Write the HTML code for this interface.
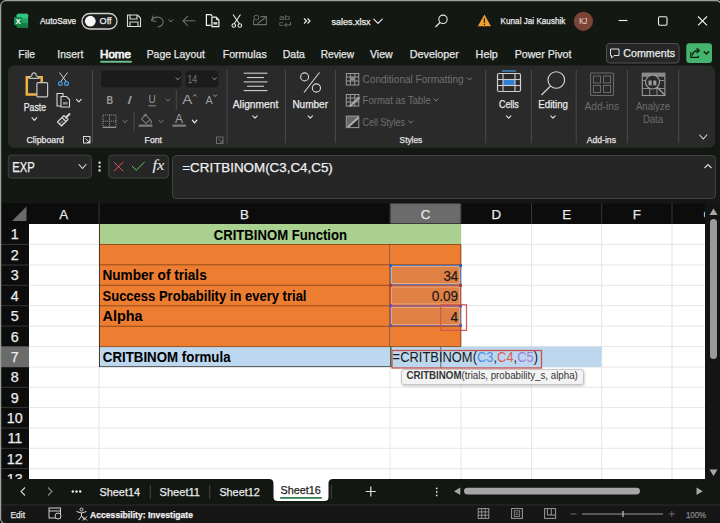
<!DOCTYPE html>
<html><head><meta charset="utf-8"><style>
html,body{margin:0;padding:0;width:720px;height:523px;overflow:hidden;background:#141813;}
svg{display:block;}
</style></head><body>
<svg width="720" height="523" viewBox="0 0 720 523">
<defs><filter id="sh" x="-10%" y="-30%" width="120%" height="170%"><feDropShadow dx="0.5" dy="1" stdDeviation="1" flood-color="#000" flood-opacity="0.25"/></filter></defs>
<rect x="0" y="0" width="720" height="523" fill="#141813" rx="0" /><rect x="16.7" y="13.7" width="11.4" height="14" fill="#21a366" rx="1.5" /><rect x="16.7" y="13.7" width="11.4" height="4.7" fill="#33c481" rx="1.5" /><rect x="16.7" y="23" width="11.4" height="4.7" fill="#1a7a45" rx="1.5" /><rect x="14" y="17" width="8" height="8.2" fill="#138a4b" rx="1" /><text x="15.4" y="23.7" font-size="8" fill="#ffffff" font-weight="bold" style="font-family:'Liberation Sans'" textLength="5.3" lengthAdjust="spacingAndGlyphs" >X</text><text x="40" y="24.3" font-size="9.6" fill="#f0f0f0" font-weight="normal" style="font-family:'Liberation Sans'" stroke="#f0f0f0" stroke-width="0.25" textLength="36.2" lengthAdjust="spacingAndGlyphs" >AutoSave</text><rect x="82" y="13.5" width="35" height="15.5" fill="#1c1c1c" rx="7.75" stroke="#d0d0d0" stroke-width="1.3" /><circle cx="90.3" cy="21.2" r="5.4" fill="#f6f6f6"/><text x="99.6" y="24.2" font-size="9.8" fill="#f0f0f0" font-weight="normal" style="font-family:'Liberation Sans'" stroke="#f0f0f0" stroke-width="0.25" textLength="12" lengthAdjust="spacingAndGlyphs" >Off</text><path d="M127.5 15 H137.5 L140.5 18 V26.5 H127.5 Z" stroke="#dcdcdc" fill="none" stroke-width="1.1" /><path d="M130 15 V19 H137 V15" stroke="#dcdcdc" fill="none" stroke-width="1.1" /><path d="M130 26.5 V22 H138 V26.5" stroke="#dcdcdc" fill="none" stroke-width="1.1" /><path d="M153 16 L151.5 20.5 L156 21.5 M151.8 20.3 C154 16.5 160 16 162.5 19.5 C164.5 23 162 26.5 158 27" stroke="#6f6f6f" fill="none" stroke-width="1.1" stroke-linecap="round" stroke-linejoin="round"/><path d="M168.8 19.6 L170.8 22.0 L172.8 19.6" stroke="#7a7a7a" fill="none" stroke-width="1" stroke-linecap="round" stroke-linejoin="round"/><path d="M195 20.8 H183 M187.5 16.3 L183 20.8 L187.5 25.3" stroke="#6f6f6f" fill="none" stroke-width="1.1" stroke-linecap="round" stroke-linejoin="round"/><path d="M210.8 25.4 H206.4 V14.7 H210.3 C211.3 14.7 212 15.3 212 16.3" stroke="#f2f2f2" fill="none" stroke-width="1.2" /><path d="M211.9 17.1 H216.2 L218.9 19.8 V26.7 H211.9 Z" stroke="#f2f2f2" fill="#141813" stroke-width="1.2" stroke-linejoin="round"/><path d="M216.4 17.3 V19.7 H218.8" stroke="#f2f2f2" fill="none" stroke-width="1" /><rect x="213.4" y="22.1" width="3.9" height="2.5" fill="#cfcfcf" rx="0" /><path d="M233 14.5 L239.5 24 M240.5 14.5 L234 24" stroke="#e8e8e8" fill="none" stroke-width="1.1" /><circle cx="233.8" cy="25.5" r="1.8" fill="none" stroke="#e8e8e8" stroke-width="1.1"/><circle cx="239.8" cy="25.5" r="1.8" fill="none" stroke="#e8e8e8" stroke-width="1.1"/><path d="M253.6 19.5 V24.6 H266.4 V16.6 H260.5 M257.5 23.5 L265.5 17.5" stroke="#6a6a6a" fill="none" stroke-width="1.1" /><circle cx="256.4" cy="17.6" r="2.4" fill="none" stroke="#6a6a6a" stroke-width="1"/><text x="279" y="20.3" font-size="7.6" fill="#707070" font-weight="normal" style="font-family:'Liberation Sans'" textLength="11" lengthAdjust="spacingAndGlyphs" >ab</text><text x="278.8" y="26.3" font-size="7.6" fill="#707070" font-weight="normal" style="font-family:'Liberation Sans'" textLength="4.5" lengthAdjust="spacingAndGlyphs" >c</text><path d="M284.5 25 H290.5 V22 M286.5 23 L284.5 25 L286.5 27" stroke="#707070" fill="none" stroke-width="1" /><path d="M304 18.5 L306.5 21 L304 23.5 M307.5 18.5 L310 21 L307.5 23.5" stroke="#f0f0f0" fill="none" stroke-width="1.1" /><text x="331.5" y="24.8" font-size="9.4" fill="#f0f0f0" font-weight="normal" style="font-family:'Liberation Sans'" stroke="#f0f0f0" stroke-width="0.25" textLength="39" lengthAdjust="spacingAndGlyphs" >sales.xlsx</text><path d="M373.7 19.099999999999998 L378 23.3 L382.3 19.099999999999998" stroke="#f0f0f0" fill="none" stroke-width="1.1" stroke-linecap="round" stroke-linejoin="round"/><circle cx="443" cy="19.3" r="4.2" fill="none" stroke="#e8e8e8" stroke-width="1.1"/><line x1="440" y1="22.5" x2="435.5" y2="27" stroke="#e8e8e8" stroke-width="1.2" /><path d="M484.4 14.5 L491 26.3 H477.8 Z" stroke="none" fill="#f0a030" stroke-width="1" /><rect x="483.8" y="18.2" width="1.2" height="4.6" fill="#2a1a00" rx="0" /><rect x="483.8" y="23.8" width="1.2" height="1.3" fill="#2a1a00" rx="0" /><text x="500.6" y="24.2" font-size="9.9" fill="#f0f0f0" font-weight="normal" style="font-family:'Liberation Sans'" stroke="#f0f0f0" stroke-width="0.25" textLength="64.8" lengthAdjust="spacingAndGlyphs" >Kunal Jai Kaushik</text><circle cx="583.4" cy="21.3" r="9.6" fill="#7a4436"/><text x="579.2" y="24.3" font-size="8.2" fill="#f0e0da" font-weight="normal" style="font-family:'Liberation Sans'" textLength="8.2" lengthAdjust="spacingAndGlyphs" >KJ</text><line x1="618.7" y1="20.5" x2="627.5" y2="20.5" stroke="#f0f0f0" stroke-width="1.1" /><rect x="658.5" y="16.7" width="8.5" height="8.5" fill="none" rx="1.2" stroke="#f0f0f0" stroke-width="1.1" /><path d="M698 16.5 L707 25.3 M707 16.5 L698 25.3" stroke="#f0f0f0" fill="none" stroke-width="1.1" /><text x="18.3" y="57.6" font-size="11.4" fill="#e6e6e6" font-weight="normal" style="font-family:'Liberation Sans'" stroke="#e6e6e6" stroke-width="0.25" textLength="16.7" lengthAdjust="spacingAndGlyphs" >File</text><text x="57.3" y="57.6" font-size="11.4" fill="#e6e6e6" font-weight="normal" style="font-family:'Liberation Sans'" stroke="#e6e6e6" stroke-width="0.25" textLength="26.0" lengthAdjust="spacingAndGlyphs" >Insert</text><text x="100" y="57.6" font-size="11.4" fill="#f2f2f2" font-weight="normal" style="font-family:'Liberation Sans'" stroke="#f2f2f2" stroke-width="0.75" textLength="31" lengthAdjust="spacingAndGlyphs" >Home</text><text x="146.7" y="57.6" font-size="11.4" fill="#e6e6e6" font-weight="normal" style="font-family:'Liberation Sans'" stroke="#e6e6e6" stroke-width="0.25" textLength="58.3" lengthAdjust="spacingAndGlyphs" >Page Layout</text><text x="222.7" y="57.6" font-size="11.4" fill="#e6e6e6" font-weight="normal" style="font-family:'Liberation Sans'" stroke="#e6e6e6" stroke-width="0.25" textLength="44.0" lengthAdjust="spacingAndGlyphs" >Formulas</text><text x="282.7" y="57.6" font-size="11.4" fill="#e6e6e6" font-weight="normal" style="font-family:'Liberation Sans'" stroke="#e6e6e6" stroke-width="0.25" textLength="22.3" lengthAdjust="spacingAndGlyphs" >Data</text><text x="320.7" y="57.6" font-size="11.4" fill="#e6e6e6" font-weight="normal" style="font-family:'Liberation Sans'" stroke="#e6e6e6" stroke-width="0.25" textLength="33.3" lengthAdjust="spacingAndGlyphs" >Review</text><text x="370" y="57.6" font-size="11.4" fill="#e6e6e6" font-weight="normal" style="font-family:'Liberation Sans'" stroke="#e6e6e6" stroke-width="0.25" textLength="22.7" lengthAdjust="spacingAndGlyphs" >View</text><text x="409.7" y="57.6" font-size="11.4" fill="#e6e6e6" font-weight="normal" style="font-family:'Liberation Sans'" stroke="#e6e6e6" stroke-width="0.25" textLength="49.2" lengthAdjust="spacingAndGlyphs" >Developer</text><text x="475.6" y="57.6" font-size="11.4" fill="#e6e6e6" font-weight="normal" style="font-family:'Liberation Sans'" stroke="#e6e6e6" stroke-width="0.25" textLength="22.2" lengthAdjust="spacingAndGlyphs" >Help</text><text x="514.7" y="57.6" font-size="11.4" fill="#e6e6e6" font-weight="normal" style="font-family:'Liberation Sans'" stroke="#e6e6e6" stroke-width="0.25" textLength="56.7" lengthAdjust="spacingAndGlyphs" >Power Pivot</text><rect x="100" y="60.8" width="32" height="2" fill="#6dbd8a" rx="1" /><rect x="606.5" y="43.5" width="72.5" height="19.5" fill="#262626" rx="3" stroke="#505050" stroke-width="1" /><path d="M610.5 49 H619 V55.5 H614 L611.5 58 V55.5 H610.5 Z" stroke="#e0e0e0" fill="none" stroke-width="1" stroke-linejoin="round"/><text x="623.3" y="56.8" font-size="11.2" fill="#ececec" font-weight="normal" style="font-family:'Liberation Sans'" stroke="#ececec" stroke-width="0.25" textLength="51.7" lengthAdjust="spacingAndGlyphs" >Comments</text><rect x="686.3" y="43.3" width="25.7" height="19.7" fill="#47b46d" rx="3" /><path d="M690.8 52 V57.3 H698.3 V55.8" stroke="#0a1f10" fill="none" stroke-width="1.2" /><path d="M692.3 55.5 C692.8 52.2 694.8 50.6 698.3 50.6" stroke="#0a1f10" fill="none" stroke-width="1.3" /><path d="M696.6 48.2 L699.3 50.6 L696.6 53" stroke="#0a1f10" fill="none" stroke-width="1.3" stroke-linejoin="round"/><path d="M704.1999999999999 51.8 L706.4 54.0 L708.6 51.8" stroke="#0a1f10" fill="none" stroke-width="1.4" stroke-linecap="round" stroke-linejoin="round"/><rect x="8" y="65.5" width="707" height="82.3" fill="#2a2a2a" rx="6" /><line x1="92.5" y1="70" x2="92.5" y2="143" stroke="#4a4a4a" stroke-width="1" /><line x1="227" y1="70" x2="227" y2="143" stroke="#4a4a4a" stroke-width="1" /><line x1="285.4" y1="70" x2="285.4" y2="143" stroke="#4a4a4a" stroke-width="1" /><line x1="335.4" y1="70" x2="335.4" y2="143" stroke="#4a4a4a" stroke-width="1" /><line x1="485.7" y1="70" x2="485.7" y2="143" stroke="#4a4a4a" stroke-width="1" /><line x1="531.3" y1="70" x2="531.3" y2="143" stroke="#4a4a4a" stroke-width="1" /><line x1="576.2" y1="70" x2="576.2" y2="143" stroke="#4a4a4a" stroke-width="1" /><line x1="627.3" y1="70" x2="627.3" y2="143" stroke="#4a4a4a" stroke-width="1" /><line x1="678.8" y1="70" x2="678.8" y2="143" stroke="#4a4a4a" stroke-width="1" /><path d="M26.8 77.3 H41.7 V94.6 H26.8 Z" stroke="#efb443" fill="none" stroke-width="2.5" /><path d="M29.3 78.4 H38.7 C38.7 76.6 37.6 76 36.3 76 C36.3 74 35.3 72.9 34 72.9 C32.7 72.9 31.7 74 31.7 76 C30.4 76 29.3 76.6 29.3 78.4 Z" stroke="#c0c0c0" fill="#2a2a2a" stroke-width="1.1" /><rect x="36.9" y="82.7" width="10.7" height="14.2" fill="#2a2a2a" rx="1" stroke="#c6c6c6" stroke-width="1.2" /><text x="23.8" y="110.6" font-size="10.8" fill="#ececec" font-weight="normal" style="font-family:'Liberation Sans'" stroke="#ececec" stroke-width="0.25" textLength="22.2" lengthAdjust="spacingAndGlyphs" >Paste</text><path d="M32.0 117.7 L34.4 120.3 L36.8 117.7" stroke="#e0e0e0" fill="none" stroke-width="1.1" stroke-linecap="round" stroke-linejoin="round"/><path d="M59.5 72.5 L66.5 82 M67.5 72.5 L60.5 82" stroke="#d0d0d0" fill="none" stroke-width="1" /><circle cx="60.5" cy="83.5" r="1.9" fill="none" stroke="#4aa0e6" stroke-width="1.2"/><circle cx="66.5" cy="83.5" r="1.9" fill="none" stroke="#4aa0e6" stroke-width="1.2"/><path d="M57 93.5 H63 V106 H57 Z" stroke="#d8d8d8" fill="none" stroke-width="1.1" /><path d="M61 96.5 H66.5 L69.5 99.5 V107 H61 Z" stroke="#d8d8d8" fill="#2a2a2a" stroke-width="1.1" /><rect x="63" y="102" width="4.5" height="2.5" fill="#888888" rx="0" /><path d="M76.39999999999999 99.3 L78.8 101.89999999999999 L81.2 99.3" stroke="#e0e0e0" fill="none" stroke-width="1.1" stroke-linecap="round" stroke-linejoin="round"/><path d="M57.5 122 L62 117.5 L66 121.5 L61.5 126 Z" stroke="#d8d8d8" fill="none" stroke-width="1.1" stroke-linejoin="round"/><path d="M62 117.5 L64 115.5 L68 119.5 L66 121.5" stroke="#d8d8d8" fill="none" stroke-width="1.1" stroke-linejoin="round"/><path d="M66 117.5 L69.5 114" stroke="#d8d8d8" fill="none" stroke-width="1.8" stroke-linecap="round"/><path d="M59.5 124 L63 120.5 M61 125.5 L64.5 122" stroke="#d8d8d8" fill="none" stroke-width="0.8" /><text x="26.4" y="142.6" font-size="9.4" fill="#e6e6e6" font-weight="normal" style="font-family:'Liberation Sans'" stroke="#e6e6e6" stroke-width="0.25" textLength="37.6" lengthAdjust="spacingAndGlyphs" >Clipboard</text><rect x="83.5" y="136.5" width="6.5" height="6.5" fill="none" rx="0" stroke="#d8d8d8" stroke-width="1" /><path d="M85.5 138.5 L89.5 142.5 M89.5 140 V142.5 H87" stroke="#d8d8d8" fill="none" stroke-width="1" /><rect x="100.5" y="70" width="81.5" height="18" fill="#1b1b1b" rx="3.5" stroke="#303030" stroke-width="0.8" /><path d="M176.0 77.7 L177.8 79.89999999999999 L179.60000000000002 77.7" stroke="#8a8a8a" fill="none" stroke-width="1" stroke-linecap="round" stroke-linejoin="round"/><rect x="185" y="70" width="34" height="18" fill="#1b1b1b" rx="3.5" stroke="#303030" stroke-width="0.8" /><text x="187.4" y="83.3" font-size="10.5" fill="#6a6a6a" font-weight="normal" style="font-family:'Liberation Sans'" stroke="#6a6a6a" stroke-width="0.25" textLength="9.6" lengthAdjust="spacingAndGlyphs" >14</text><path d="M212.7 77.7 L214.5 79.89999999999999 L216.3 77.7" stroke="#8a8a8a" fill="none" stroke-width="1" stroke-linecap="round" stroke-linejoin="round"/><text x="106.6" y="103.6" font-size="10.5" fill="#9a9a9a" font-weight="bold" style="font-family:'Liberation Sans'" textLength="6.6" lengthAdjust="spacingAndGlyphs" >B</text><text x="127" y="103.6" font-size="10.5" fill="#9a9a9a" font-weight="normal" style="font-family:'Liberation Sans'" textLength="5" lengthAdjust="spacingAndGlyphs" font-style="italic">I</text><text x="148.6" y="102.8" font-size="10" fill="#9a9a9a" font-weight="normal" style="font-family:'Liberation Sans'" textLength="7.2" lengthAdjust="spacingAndGlyphs" >U</text><line x1="148.5" y1="105.8" x2="156" y2="105.8" stroke="#8f8f8f" stroke-width="1" /><path d="M166 98.8 L168 101.2 L170 98.8" stroke="#777777" fill="none" stroke-width="1" stroke-linecap="round" stroke-linejoin="round"/><line x1="176.3" y1="90" x2="176.3" y2="110" stroke="#4a4a4a" stroke-width="1" /><text x="182.3" y="104.2" font-size="13.5" fill="#a0a0a0" font-weight="normal" style="font-family:'Liberation Sans'" textLength="10" lengthAdjust="spacingAndGlyphs" >A</text><path d="M193 96.5 L194.7 94.5 L196.4 96.5" stroke="#a0a0a0" fill="none" stroke-width="0.9" /><text x="205.5" y="104.2" font-size="11.5" fill="#a0a0a0" font-weight="normal" style="font-family:'Liberation Sans'" textLength="7.2" lengthAdjust="spacingAndGlyphs" >A</text><path d="M213.3 94.6 L215.1 96.6 L216.9 94.6" stroke="#a0a0a0" fill="none" stroke-width="0.9" /><path d="M103 115 H116 V127.5 H103 Z M109.5 115 V127.5 M103 121.2 H116" stroke="#8a8a8a" fill="none" stroke-width="1" stroke-dasharray="1.2 0.8"/><line x1="103" y1="127.3" x2="116" y2="127.3" stroke="#9a9a9a" stroke-width="1.2" /><path d="M123 120.3 L125 122.7 L127 120.3" stroke="#777777" fill="none" stroke-width="1" stroke-linecap="round" stroke-linejoin="round"/><line x1="134" y1="112" x2="134" y2="131" stroke="#4a4a4a" stroke-width="1" /><path d="M141.5 119 L145.5 115 L150 119.5 L146 123.5 Z" stroke="#a0a0a0" fill="none" stroke-width="1" stroke-linejoin="round"/><path d="M144 116.5 C144 114 146 113.5 147 115" stroke="#a0a0a0" fill="none" stroke-width="1" /><path d="M150 119.5 C151.5 121 151.8 122.5 151 123.5" stroke="#a0a0a0" fill="none" stroke-width="1" /><rect x="138.8" y="124.5" width="13.6" height="2.3" fill="#7a7a7a" rx="0" /><path d="M159 120.3 L161 122.7 L163 120.3" stroke="#777777" fill="none" stroke-width="1" stroke-linecap="round" stroke-linejoin="round"/><text x="175" y="123.2" font-size="12" fill="#a0a0a0" font-weight="normal" style="font-family:'Liberation Sans'" textLength="8" lengthAdjust="spacingAndGlyphs" >A</text><rect x="172.4" y="124.5" width="13.6" height="2.3" fill="#7a7a7a" rx="0" /><path d="M192.29999999999998 120.1 L194.6 122.9 L196.9 120.1" stroke="#f0f0f0" fill="none" stroke-width="1.2" stroke-linecap="round" stroke-linejoin="round"/><text x="144.6" y="142.6" font-size="9.4" fill="#e6e6e6" font-weight="normal" style="font-family:'Liberation Sans'" stroke="#e6e6e6" stroke-width="0.25" textLength="17.4" lengthAdjust="spacingAndGlyphs" >Font</text><rect x="216.5" y="137" width="6.5" height="6.5" fill="none" rx="0" stroke="#6a6a6a" stroke-width="1" /><path d="M218.5 139 L222.5 143 M222.5 140.5 V143 H220" stroke="#6a6a6a" fill="none" stroke-width="1" /><line x1="243.7" y1="73.2" x2="267.5" y2="73.2" stroke="#cfcfcf" stroke-width="1.1" /><line x1="247" y1="77.55" x2="264" y2="77.55" stroke="#cfcfcf" stroke-width="1.1" /><line x1="243.7" y1="81.9" x2="267.5" y2="81.9" stroke="#cfcfcf" stroke-width="1.1" /><line x1="247" y1="86.25" x2="264" y2="86.25" stroke="#cfcfcf" stroke-width="1.1" /><line x1="243.7" y1="90.6" x2="267.5" y2="90.6" stroke="#cfcfcf" stroke-width="1.1" /><text x="232.8" y="108" font-size="10.8" fill="#ececec" font-weight="normal" style="font-family:'Liberation Sans'" stroke="#ececec" stroke-width="0.25" textLength="45.5" lengthAdjust="spacingAndGlyphs" >Alignment</text><path d="M252.8 115.8 L255 118.2 L257.2 115.8" stroke="#e0e0e0" fill="none" stroke-width="1.1" stroke-linecap="round" stroke-linejoin="round"/><circle cx="304.6" cy="76.9" r="4" fill="none" stroke="#d8d8d8" stroke-width="1.1"/><circle cx="316.4" cy="88" r="4.1" fill="none" stroke="#d8d8d8" stroke-width="1.1"/><line x1="319.5" y1="72.5" x2="304" y2="92.5" stroke="#d8d8d8" stroke-width="1.1" /><text x="292.4" y="108" font-size="10.8" fill="#ececec" font-weight="normal" style="font-family:'Liberation Sans'" stroke="#ececec" stroke-width="0.25" textLength="35.6" lengthAdjust="spacingAndGlyphs" >Number</text><path d="M308.1 115.8 L310.3 118.2 L312.5 115.8" stroke="#e0e0e0" fill="none" stroke-width="1.1" stroke-linecap="round" stroke-linejoin="round"/><rect x="346.3" y="73.5" width="12.5" height="11.5" fill="none" rx="0" stroke="#9a9a9a" stroke-width="1" /><line x1="346.3" y1="77" x2="358.8" y2="77" stroke="#9a9a9a" stroke-width="1" /><line x1="346.3" y1="81" x2="358.8" y2="81" stroke="#9a9a9a" stroke-width="1" /><line x1="350.3" y1="73.5" x2="350.3" y2="85" stroke="#9a9a9a" stroke-width="1" /><line x1="354.8" y1="73.5" x2="354.8" y2="85" stroke="#9a9a9a" stroke-width="1" /><rect x="350.3" y="77" width="4.2" height="3.5" fill="#8a8a8a" rx="0" /><text x="362.6" y="83" font-size="11" fill="#707070" font-weight="normal" style="font-family:'Liberation Sans'" textLength="101" lengthAdjust="spacingAndGlyphs" >Conditional Formatting</text><path d="M467.5 77.8 L469.5 80.2 L471.5 77.8" stroke="#7c7c7c" fill="none" stroke-width="1" stroke-linecap="round" stroke-linejoin="round"/><rect x="346.3" y="94.5" width="12.5" height="11.5" fill="none" rx="0" stroke="#9a9a9a" stroke-width="1" /><line x1="346.3" y1="98" x2="358.8" y2="98" stroke="#9a9a9a" stroke-width="1" /><line x1="346.3" y1="102" x2="358.8" y2="102" stroke="#9a9a9a" stroke-width="1" /><line x1="350.3" y1="94.5" x2="350.3" y2="106" stroke="#9a9a9a" stroke-width="1" /><line x1="354.8" y1="94.5" x2="354.8" y2="106" stroke="#9a9a9a" stroke-width="1" /><path d="M349.5 106.5 L359.5 97.5" stroke="#a8a8a8" fill="none" stroke-width="2.2" /><text x="362.6" y="104" font-size="11" fill="#707070" font-weight="normal" style="font-family:'Liberation Sans'" textLength="68.2" lengthAdjust="spacingAndGlyphs" >Format as Table</text><path d="M434 98.8 L436 101.2 L438 98.8" stroke="#7c7c7c" fill="none" stroke-width="1" stroke-linecap="round" stroke-linejoin="round"/><path d="M346.5 116 H359 L346.5 127.5 Z" stroke="none" fill="#666666" stroke-width="1" /><rect x="346.3" y="116.1" width="12.5" height="11.5" fill="none" rx="0" stroke="#9a9a9a" stroke-width="1" /><path d="M348 127 L358.5 117.5" stroke="#b0b0b0" fill="none" stroke-width="2" /><text x="362.6" y="126" font-size="11" fill="#707070" font-weight="normal" style="font-family:'Liberation Sans'" textLength="42.4" lengthAdjust="spacingAndGlyphs" >Cell Styles</text><path d="M408.8 120.8 L410.8 123.2 L412.8 120.8" stroke="#7c7c7c" fill="none" stroke-width="1" stroke-linecap="round" stroke-linejoin="round"/><text x="399.6" y="143.4" font-size="9.4" fill="#e6e6e6" font-weight="normal" style="font-family:'Liberation Sans'" stroke="#e6e6e6" stroke-width="0.25" textLength="22.6" lengthAdjust="spacingAndGlyphs" >Styles</text><line x1="501.7" y1="71" x2="515.8" y2="71" stroke="#4aa0e6" stroke-width="1.2" /><rect x="497.5" y="73.5" width="23" height="18" fill="none" rx="1.5" stroke="#cfcfcf" stroke-width="1.2" /><rect x="503" y="79.5" width="12" height="6" fill="#2b7fd4" rx="0" /><line x1="497.5" y1="79.5" x2="520.5" y2="79.5" stroke="#cfcfcf" stroke-width="1.1" /><line x1="497.5" y1="85.5" x2="520.5" y2="85.5" stroke="#cfcfcf" stroke-width="1.1" /><line x1="503" y1="73.5" x2="503" y2="91.5" stroke="#cfcfcf" stroke-width="1.1" /><line x1="515" y1="73.5" x2="515" y2="91.5" stroke="#cfcfcf" stroke-width="1.1" /><text x="499" y="107.5" font-size="10.8" fill="#ececec" font-weight="normal" style="font-family:'Liberation Sans'" stroke="#ececec" stroke-width="0.25" textLength="19.7" lengthAdjust="spacingAndGlyphs" >Cells</text><path d="M506.5 115.8 L508.7 118.2 L510.9 115.8" stroke="#e0e0e0" fill="none" stroke-width="1.1" stroke-linecap="round" stroke-linejoin="round"/><circle cx="556.3" cy="80" r="8.3" fill="none" stroke="#d8d8d8" stroke-width="1.1"/><line x1="550.5" y1="86" x2="541.5" y2="95" stroke="#d8d8d8" stroke-width="1.1" /><text x="538.3" y="107.5" font-size="10.8" fill="#ececec" font-weight="normal" style="font-family:'Liberation Sans'" stroke="#ececec" stroke-width="0.25" textLength="29.7" lengthAdjust="spacingAndGlyphs" >Editing</text><path d="M550.8 115.8 L553 118.2 L555.2 115.8" stroke="#e0e0e0" fill="none" stroke-width="1.1" stroke-linecap="round" stroke-linejoin="round"/><rect x="590.5" y="73" width="23" height="22.5" fill="none" rx="1" stroke="#6a6a6a" stroke-width="1.1" /><rect x="593.5" y="76" width="7" height="7" fill="none" rx="0" stroke="#6a6a6a" stroke-width="1" /><rect x="603.5" y="76" width="7" height="7" fill="none" rx="0" stroke="#6a6a6a" stroke-width="1" /><rect x="593.5" y="85.5" width="7" height="7" fill="none" rx="0" stroke="#6a6a6a" stroke-width="1" /><rect x="603.5" y="85.5" width="7" height="7" fill="none" rx="0" stroke="#6a6a6a" stroke-width="1" /><text x="584.6" y="109.8" font-size="10.8" fill="#6a6a6a" font-weight="normal" style="font-family:'Liberation Sans'" stroke="#6a6a6a" stroke-width="0.05" textLength="34.4" lengthAdjust="spacingAndGlyphs" >Add-ins</text><text x="586.7" y="142.6" font-size="9.4" fill="#e6e6e6" font-weight="normal" style="font-family:'Liberation Sans'" stroke="#e6e6e6" stroke-width="0.25" textLength="29.3" lengthAdjust="spacingAndGlyphs" >Add-ins</text><rect x="642.3" y="73.2" width="22.6" height="22.3" fill="none" rx="0" stroke="#9a9a9a" stroke-width="1.1" /><rect x="642.3" y="73.2" width="22.6" height="3.6" fill="#8a8a8a" rx="0" /><line x1="642.3" y1="80.5" x2="665" y2="80.5" stroke="#8a8a8a" stroke-width="1" /><line x1="642.3" y1="88.5" x2="665" y2="88.5" stroke="#8a8a8a" stroke-width="1" /><line x1="649.7" y1="76.8" x2="649.7" y2="95.5" stroke="#8a8a8a" stroke-width="1" /><line x1="657" y1="76.8" x2="657" y2="95.5" stroke="#8a8a8a" stroke-width="1" /><circle cx="652.5" cy="82" r="7" fill="#2a2a2a" stroke="#a0a0a0" stroke-width="1.1"/><rect x="648.5" y="80.5" width="7.8" height="4.8" fill="#9a9a9a" rx="0" /><rect x="651.8" y="77.8" width="1.4" height="7.5" fill="#1e1e1e" rx="0" /><line x1="657.3" y1="87.3" x2="665" y2="95.3" stroke="#a0a0a0" stroke-width="1.3" /><text x="636" y="109.8" font-size="10.8" fill="#6a6a6a" font-weight="normal" style="font-family:'Liberation Sans'" stroke="#6a6a6a" stroke-width="0.05" textLength="34" lengthAdjust="spacingAndGlyphs" >Analyze</text><text x="643" y="122.7" font-size="10.8" fill="#6a6a6a" font-weight="normal" style="font-family:'Liberation Sans'" stroke="#6a6a6a" stroke-width="0.05" textLength="20" lengthAdjust="spacingAndGlyphs" >Data</text><path d="M699.8 135 L703.3 139 L706.8 135" stroke="#e0e0e0" fill="none" stroke-width="1.1" stroke-linecap="round" stroke-linejoin="round"/><rect x="8.3" y="155.2" width="83" height="22.8" fill="#262626" rx="3" stroke="#444444" stroke-width="1" /><text x="12.2" y="172" font-size="14.1" fill="#f0f0f0" font-weight="normal" style="font-family:'Liberation Sans'" stroke="#f0f0f0" stroke-width="0.25" textLength="22.5" lengthAdjust="spacingAndGlyphs" >EXP</text><path d="M79.0 164.5 L82.5 168.5 L86.0 164.5" stroke="#e0e0e0" fill="none" stroke-width="1.1" stroke-linecap="round" stroke-linejoin="round"/><rect x="98.5" y="161.5" width="2.2" height="2.2" fill="#e0e0e0" rx="0.6" /><rect x="98.5" y="165.4" width="2.2" height="2.2" fill="#e0e0e0" rx="0.6" /><rect x="98.5" y="169.3" width="2.2" height="2.2" fill="#e0e0e0" rx="0.6" /><rect x="108.8" y="155.2" width="59.5" height="22.8" fill="#262626" rx="3" stroke="#444444" stroke-width="1" /><path d="M113.8 162 L123.3 171.3 M123.3 162 L113.8 171.3" stroke="#e05a5a" fill="none" stroke-width="1" /><path d="M132 166 L136.3 170.2 L144.6 162" stroke="#62c46a" fill="none" stroke-width="1" /><text x="152.5" y="170.3" font-size="15" fill="#e8e8e8" font-weight="normal" style="font-family:'Liberation Serif'" stroke="#e8e8e8" stroke-width="0.1" textLength="12" lengthAdjust="spacingAndGlyphs" font-style="italic">fx</text><rect x="172.5" y="155.5" width="543" height="43" fill="#262626" rx="4" stroke="#444444" stroke-width="1" /><text x="182.3" y="172" font-size="13.6" fill="#f0f0f0" font-weight="normal" style="font-family:'Liberation Sans'" stroke="#f0f0f0" stroke-width="0.25" textLength="150.5" lengthAdjust="spacingAndGlyphs" >=CRITBINOM(C3,C4,C5)</text><path d="M704.5 168 L708 164.5 L711.5 168" stroke="#e0e0e0" fill="none" stroke-width="1.1" /><rect x="0" y="203.5" width="705" height="20.5" fill="#0c0c0c" rx="0" /><rect x="1" y="203.5" width="28" height="276" fill="#0c0c0c" rx="0" /><rect x="29" y="224" width="676" height="255" fill="#ffffff" rx="0" /><line x1="29" y1="244.4" x2="705" y2="244.4" stroke="#e6e6e6" stroke-width="1" /><line x1="29" y1="265" x2="705" y2="265" stroke="#e6e6e6" stroke-width="1" /><line x1="29" y1="285.3" x2="705" y2="285.3" stroke="#e6e6e6" stroke-width="1" /><line x1="29" y1="305.7" x2="705" y2="305.7" stroke="#e6e6e6" stroke-width="1" /><line x1="29" y1="326.1" x2="705" y2="326.1" stroke="#e6e6e6" stroke-width="1" /><line x1="29" y1="346.6" x2="705" y2="346.6" stroke="#e6e6e6" stroke-width="1" /><line x1="29" y1="367" x2="705" y2="367" stroke="#e6e6e6" stroke-width="1" /><line x1="29" y1="387.3" x2="705" y2="387.3" stroke="#e6e6e6" stroke-width="1" /><line x1="29" y1="407.6" x2="705" y2="407.6" stroke="#e6e6e6" stroke-width="1" /><line x1="29" y1="428" x2="705" y2="428" stroke="#e6e6e6" stroke-width="1" /><line x1="29" y1="448.3" x2="705" y2="448.3" stroke="#e6e6e6" stroke-width="1" /><line x1="29" y1="468.6" x2="705" y2="468.6" stroke="#e6e6e6" stroke-width="1" /><line x1="99" y1="224" x2="99" y2="479" stroke="#e6e6e6" stroke-width="1" /><line x1="390" y1="224" x2="390" y2="479" stroke="#e6e6e6" stroke-width="1" /><line x1="461" y1="224" x2="461" y2="479" stroke="#e6e6e6" stroke-width="1" /><line x1="531.5" y1="224" x2="531.5" y2="479" stroke="#e6e6e6" stroke-width="1" /><line x1="601.7" y1="224" x2="601.7" y2="479" stroke="#e6e6e6" stroke-width="1" /><line x1="672" y1="224" x2="672" y2="479" stroke="#e6e6e6" stroke-width="1" /><line x1="99" y1="203.5" x2="99" y2="223.5" stroke="#383838" stroke-width="1" /><line x1="390" y1="203.5" x2="390" y2="223.5" stroke="#383838" stroke-width="1" /><line x1="461" y1="203.5" x2="461" y2="223.5" stroke="#383838" stroke-width="1" /><line x1="531.5" y1="203.5" x2="531.5" y2="223.5" stroke="#383838" stroke-width="1" /><line x1="601.7" y1="203.5" x2="601.7" y2="223.5" stroke="#383838" stroke-width="1" /><line x1="672" y1="203.5" x2="672" y2="223.5" stroke="#383838" stroke-width="1" /><line x1="1" y1="244.4" x2="28.5" y2="244.4" stroke="#383838" stroke-width="1" /><line x1="1" y1="265" x2="28.5" y2="265" stroke="#383838" stroke-width="1" /><line x1="1" y1="285.3" x2="28.5" y2="285.3" stroke="#383838" stroke-width="1" /><line x1="1" y1="305.7" x2="28.5" y2="305.7" stroke="#383838" stroke-width="1" /><line x1="1" y1="326.1" x2="28.5" y2="326.1" stroke="#383838" stroke-width="1" /><line x1="1" y1="346.6" x2="28.5" y2="346.6" stroke="#383838" stroke-width="1" /><line x1="1" y1="367" x2="28.5" y2="367" stroke="#383838" stroke-width="1" /><line x1="1" y1="387.3" x2="28.5" y2="387.3" stroke="#383838" stroke-width="1" /><line x1="1" y1="407.6" x2="28.5" y2="407.6" stroke="#383838" stroke-width="1" /><line x1="1" y1="428" x2="28.5" y2="428" stroke="#383838" stroke-width="1" /><line x1="1" y1="448.3" x2="28.5" y2="448.3" stroke="#383838" stroke-width="1" /><line x1="1" y1="468.6" x2="28.5" y2="468.6" stroke="#383838" stroke-width="1" /><path d="M26.5 206.5 V221 H12 Z" stroke="none" fill="#6a6a6a" stroke-width="1" /><rect x="390.5" y="203.5" width="70" height="20" fill="#6b6b6b" rx="0" /><rect x="1" y="346.6" width="28" height="20.4" fill="#6b6b6b" rx="0" /><text x="63.75" y="219" font-size="13.3" fill="#e8e8e8" font-weight="normal" style="font-family:'Liberation Sans'" stroke="#e8e8e8" stroke-width="0.25" text-anchor="middle">A</text><text x="244.5" y="219" font-size="13.3" fill="#e8e8e8" font-weight="normal" style="font-family:'Liberation Sans'" stroke="#e8e8e8" stroke-width="0.25" text-anchor="middle">B</text><text x="425.5" y="219" font-size="13.3" fill="#e8e8e8" font-weight="normal" style="font-family:'Liberation Sans'" stroke="#e8e8e8" stroke-width="0.25" text-anchor="middle">C</text><text x="496.25" y="219" font-size="13.3" fill="#e8e8e8" font-weight="normal" style="font-family:'Liberation Sans'" stroke="#e8e8e8" stroke-width="0.25" text-anchor="middle">D</text><text x="566.6" y="219" font-size="13.3" fill="#e8e8e8" font-weight="normal" style="font-family:'Liberation Sans'" stroke="#e8e8e8" stroke-width="0.25" text-anchor="middle">E</text><text x="636.85" y="219" font-size="13.3" fill="#e8e8e8" font-weight="normal" style="font-family:'Liberation Sans'" stroke="#e8e8e8" stroke-width="0.25" text-anchor="middle">F</text><text x="703.6" y="219" font-size="13.3" fill="#e8e8e8" font-weight="normal" style="font-family:'Liberation Sans'" stroke="#e8e8e8" stroke-width="0.25" >G</text><text x="14.8" y="239.39999999999998" font-size="14.3" fill="#ececec" font-weight="normal" style="font-family:'Liberation Sans'" stroke="#ececec" stroke-width="0.25" text-anchor="middle">1</text><text x="14.8" y="259.9" font-size="14.3" fill="#ececec" font-weight="normal" style="font-family:'Liberation Sans'" stroke="#ececec" stroke-width="0.25" text-anchor="middle">2</text><text x="14.8" y="280.34999999999997" font-size="14.3" fill="#ececec" font-weight="normal" style="font-family:'Liberation Sans'" stroke="#ececec" stroke-width="0.25" text-anchor="middle">3</text><text x="14.8" y="300.7" font-size="14.3" fill="#ececec" font-weight="normal" style="font-family:'Liberation Sans'" stroke="#ececec" stroke-width="0.25" text-anchor="middle">4</text><text x="14.8" y="321.09999999999997" font-size="14.3" fill="#ececec" font-weight="normal" style="font-family:'Liberation Sans'" stroke="#ececec" stroke-width="0.25" text-anchor="middle">5</text><text x="14.8" y="341.55" font-size="14.3" fill="#ececec" font-weight="normal" style="font-family:'Liberation Sans'" stroke="#ececec" stroke-width="0.25" text-anchor="middle">6</text><text x="14.8" y="362.0" font-size="14.3" fill="#ececec" font-weight="normal" style="font-family:'Liberation Sans'" stroke="#ececec" stroke-width="0.25" text-anchor="middle">7</text><text x="14.8" y="382.34999999999997" font-size="14.3" fill="#ececec" font-weight="normal" style="font-family:'Liberation Sans'" stroke="#ececec" stroke-width="0.25" text-anchor="middle">8</text><text x="14.8" y="402.65000000000003" font-size="14.3" fill="#ececec" font-weight="normal" style="font-family:'Liberation Sans'" stroke="#ececec" stroke-width="0.25" text-anchor="middle">9</text><text x="14.8" y="423.0" font-size="14.3" fill="#ececec" font-weight="normal" style="font-family:'Liberation Sans'" stroke="#ececec" stroke-width="0.25" text-anchor="middle">10</text><text x="14.8" y="443.34999999999997" font-size="14.3" fill="#ececec" font-weight="normal" style="font-family:'Liberation Sans'" stroke="#ececec" stroke-width="0.25" text-anchor="middle">11</text><text x="14.8" y="463.65000000000003" font-size="14.3" fill="#ececec" font-weight="normal" style="font-family:'Liberation Sans'" stroke="#ececec" stroke-width="0.25" text-anchor="middle">12</text><text x="14.8" y="484.0" font-size="14.3" fill="#ececec" font-weight="normal" style="font-family:'Liberation Sans'" stroke="#ececec" stroke-width="0.25" text-anchor="middle">13</text><rect x="99.5" y="224" width="361.5" height="20.4" fill="#a9d08e" rx="0" /><rect x="99.5" y="244.4" width="291" height="102.2" fill="#ed7d31" rx="0" /><rect x="390.5" y="244.4" width="70.5" height="102.2" fill="#ed7d31" rx="0" /><rect x="99.5" y="346.6" width="502.2" height="20.4" fill="#bdd7ee" rx="0" /><line x1="99" y1="244.5" x2="461" y2="244.5" stroke="#8a4618" stroke-width="0.9" /><line x1="99" y1="264.8" x2="461" y2="264.8" stroke="#8a4618" stroke-width="0.9" /><line x1="99" y1="285.3" x2="461" y2="285.3" stroke="#8a4618" stroke-width="0.9" /><line x1="99" y1="305.8" x2="461" y2="305.8" stroke="#8a4618" stroke-width="0.9" /><line x1="99" y1="326.3" x2="461" y2="326.3" stroke="#8a4618" stroke-width="0.9" /><line x1="99" y1="346.6" x2="461" y2="346.6" stroke="#8a4618" stroke-width="0.9" /><line x1="99" y1="366.6" x2="461" y2="366.6" stroke="#4a4a4a" stroke-width="0.9" /><line x1="99.5" y1="224" x2="99.5" y2="367" stroke="#3a2a1a" stroke-width="0.9" /><line x1="389.8" y1="244.4" x2="389.8" y2="346.6" stroke="#8a4618" stroke-width="0.9" /><line x1="460.8" y1="244.4" x2="460.8" y2="346.6" stroke="#8a4618" stroke-width="0.9" /><rect x="0" y="479" width="720" height="44" fill="#141813" rx="0" /><rect x="705" y="203.5" width="15" height="276" fill="#141414" rx="0" /><text x="213.8" y="240" font-size="13.9" fill="#000000" font-weight="bold" style="font-family:'Liberation Sans'" stroke="#000000" stroke-width="0.05" textLength="133.2" lengthAdjust="spacingAndGlyphs" >CRITBINOM Function</text><text x="102.5" y="280.2" font-size="13.8" fill="#000000" font-weight="bold" style="font-family:'Liberation Sans'" stroke="#000000" stroke-width="0.05" textLength="104.2" lengthAdjust="spacingAndGlyphs" >Number of trials</text><text x="102.5" y="300.6" font-size="13.8" fill="#000000" font-weight="bold" style="font-family:'Liberation Sans'" stroke="#000000" stroke-width="0.05" textLength="204" lengthAdjust="spacingAndGlyphs" >Success Probability in every trial</text><text x="102.5" y="321.0" font-size="13.8" fill="#000000" font-weight="bold" style="font-family:'Liberation Sans'" stroke="#000000" stroke-width="0.05" textLength="40" lengthAdjust="spacingAndGlyphs" >Alpha</text><text x="102.8" y="362.3" font-size="13.9" fill="#000000" font-weight="bold" style="font-family:'Liberation Sans'" stroke="#000000" stroke-width="0.05" textLength="127.8" lengthAdjust="spacingAndGlyphs" >CRITBINOM formula</text><text x="443.4" y="280.9" font-size="14.6" fill="#000000" font-weight="normal" style="font-family:'Liberation Sans'" stroke="#000000" stroke-width="0.15" textLength="14.8" lengthAdjust="spacingAndGlyphs" >34</text><text x="431.7" y="301.2" font-size="14.6" fill="#000000" font-weight="normal" style="font-family:'Liberation Sans'" stroke="#000000" stroke-width="0.15" textLength="26.5" lengthAdjust="spacingAndGlyphs" >0.09</text><text x="450.5" y="321.6" font-size="14.6" fill="#000000" font-weight="normal" style="font-family:'Liberation Sans'" stroke="#000000" stroke-width="0.15" textLength="7.6" lengthAdjust="spacingAndGlyphs" >4</text><rect x="390.5" y="265.5" width="70" height="19.3" fill="rgba(150,150,170,0.16)" rx="0" stroke="#4f7ec8" stroke-width="1" /><rect x="391.7" y="266.7" width="67.6" height="16.900000000000002" fill="none" rx="0" stroke="rgba(255,255,255,0.45)" stroke-width="0.7" /><rect x="390.5" y="285.8" width="70" height="19.4" fill="rgba(150,150,170,0.16)" rx="0" stroke="#c0504d" stroke-width="1" /><rect x="391.7" y="287.0" width="67.6" height="17.0" fill="none" rx="0" stroke="rgba(255,255,255,0.45)" stroke-width="0.7" /><rect x="390.5" y="306.2" width="70" height="19.4" fill="rgba(150,150,170,0.16)" rx="0" stroke="#8064a2" stroke-width="1" /><rect x="391.7" y="307.4" width="67.6" height="17.0" fill="none" rx="0" stroke="rgba(255,255,255,0.45)" stroke-width="0.7" /><rect x="389.0" y="264.0" width="3" height="3" fill="#3d5fb0" rx="0" /><rect x="459.0" y="264.0" width="3" height="3" fill="#3d5fb0" rx="0" /><rect x="389.0" y="283.8" width="3" height="3" fill="#b03a3a" rx="0" /><rect x="459.0" y="283.8" width="3" height="3" fill="#b03a3a" rx="0" /><rect x="389.0" y="304.2" width="3" height="3" fill="#6a50a0" rx="0" /><rect x="459.0" y="304.2" width="3" height="3" fill="#6a50a0" rx="0" /><rect x="389.0" y="324.1" width="3" height="3" fill="#6a50a0" rx="0" /><rect x="459.0" y="324.1" width="3" height="3" fill="#6a50a0" rx="0" /><rect x="440.7" y="304.8" width="25.8" height="25.6" fill="none" rx="0" stroke="#cf5552" stroke-width="1.2" /><line x1="390.8" y1="346.6" x2="390.8" y2="367" stroke="#3c6e4a" stroke-width="1.5" /><rect x="392" y="350.5" width="149.5" height="17.5" fill="#bdd7ee" rx="0" stroke="#c9504c" stroke-width="1.3" /><line x1="440.8" y1="347" x2="440.8" y2="368" stroke="#6a6a6a" stroke-width="1" /><text x="392.6" y="361.6" font-size="14" font-family="Liberation Sans" textLength="145.4" lengthAdjust="spacingAndGlyphs" fill="#1a1a1a">=CRITBINOM(<tspan fill="#4f8fe0">C3</tspan>,<tspan fill="#e05a5a">C4</tspan>,<tspan fill="#9b7fd8">C5</tspan>)</text><rect x="401.5" y="369.5" width="182" height="15" fill="#f3f3f3" rx="2.5" stroke="#bdbdbd" stroke-width="0.8" filter="url(#sh)"/><text x="406.4" y="379.3" font-size="10.4" font-family="Liberation Sans" textLength="171.4" lengthAdjust="spacingAndGlyphs" fill="#333333"><tspan font-weight="bold">CRITBINOM</tspan>(trials, probability_s, alpha)</text><path d="M709.5 215 L713.5 208.5 L717.5 215 Z" stroke="none" fill="#a8a8a8" stroke-width="1" /><rect x="710" y="219" width="7" height="140" fill="#9a9a9a" rx="3.5" /><path d="M709.5 469.5 L713.5 476 L717.5 469.5 Z" stroke="none" fill="#a8a8a8" stroke-width="1" /><rect x="0" y="479" width="720" height="26" fill="#121712" rx="0" /><path d="M25 487.5 L21 491.5 L25 495.5" stroke="#d8d8d8" fill="none" stroke-width="1.1" /><path d="M48 487.5 L52 491.5 L48 495.5" stroke="#8a8a8a" fill="none" stroke-width="1.1" /><rect x="71.6" y="490.3" width="2.4" height="2.4" fill="#f0f0f0" rx="1.2" /><rect x="75.3" y="490.3" width="2.4" height="2.4" fill="#f0f0f0" rx="1.2" /><rect x="79" y="490.3" width="2.4" height="2.4" fill="#f0f0f0" rx="1.2" /><text x="99.5" y="496.2" font-size="11.6" fill="#ececec" font-weight="normal" style="font-family:'Liberation Sans'" stroke="#ececec" stroke-width="0.25" textLength="40.5" lengthAdjust="spacingAndGlyphs" >Sheet14</text><line x1="150.3" y1="485" x2="150.3" y2="499" stroke="#444444" stroke-width="1" /><text x="159.5" y="496.2" font-size="11.6" fill="#ececec" font-weight="normal" style="font-family:'Liberation Sans'" stroke="#ececec" stroke-width="0.25" textLength="40.5" lengthAdjust="spacingAndGlyphs" >Sheet11</text><line x1="209.7" y1="485" x2="209.7" y2="499" stroke="#444444" stroke-width="1" /><text x="219.4" y="496.2" font-size="11.6" fill="#ececec" font-weight="normal" style="font-family:'Liberation Sans'" stroke="#ececec" stroke-width="0.25" textLength="40.3" lengthAdjust="spacingAndGlyphs" >Sheet12</text><path d="M268 479 C272 479 273.5 480 273.5 484 V497 C273.5 500 275 501 278 501 H324 C327 501 328.5 500 328.5 497 V484 C328.5 480 330 479 334 479 Z" stroke="none" fill="#ffffff" stroke-width="1" /><text x="280.5" y="493.8" font-size="11.6" fill="#1c1c1c" font-weight="normal" style="font-family:'Liberation Sans'" stroke="#1c1c1c" stroke-width="0.25" textLength="40.3" lengthAdjust="spacingAndGlyphs" >Sheet16</text><rect x="280" y="497" width="42" height="1.8" fill="#2e7d4f" rx="0.9" /><line x1="331.4" y1="485" x2="331.4" y2="499" stroke="#444444" stroke-width="1" /><path d="M370.8 486.5 V496.5 M365.8 491.5 H375.8" stroke="#e0e0e0" fill="none" stroke-width="1.2" /><rect x="435.8" y="487.5" width="1.8" height="1.8" fill="#e0e0e0" rx="0.9" /><rect x="435.8" y="491" width="1.8" height="1.8" fill="#e0e0e0" rx="0.9" /><rect x="435.8" y="494.5" width="1.8" height="1.8" fill="#e0e0e0" rx="0.9" /><path d="M460.3 487.5 L454 491.2 L460.3 495 Z" stroke="none" fill="#a8a8a8" stroke-width="1" /><rect x="464" y="487.7" width="176" height="6.8" fill="#a6a6a6" rx="3.4" /><path d="M696.5 487.5 L702.8 491.2 L696.5 495 Z" stroke="none" fill="#a8a8a8" stroke-width="1" /><rect x="0" y="505" width="720" height="18" fill="#171616" rx="0" /><line x1="0" y1="505" x2="720" y2="505" stroke="#2c2c2c" stroke-width="1.2" /><text x="10.5" y="517.8" font-size="9.2" fill="#e6e6e6" font-weight="normal" style="font-family:'Liberation Sans'" stroke="#e6e6e6" stroke-width="0.25" textLength="14.5" lengthAdjust="spacingAndGlyphs" >Edit</text><rect x="49" y="508" width="11.5" height="10" fill="none" rx="0" stroke="#d0d0d0" stroke-width="1" /><line x1="49" y1="511" x2="60.5" y2="511" stroke="#d0d0d0" stroke-width="1" /><circle cx="58" cy="516" r="3" fill="#1b1b1b" stroke="#d0d0d0" stroke-width="1"/><circle cx="81.5" cy="509.5" r="1.5" fill="none" stroke="#d8d8d8" stroke-width="1"/><path d="M76.5 511.5 L81.5 513 L86.5 511.5 M81.5 513 V516 L78.5 520 M81.5 516 L84.5 520" stroke="#d8d8d8" fill="none" stroke-width="1" /><path d="M83 516.5 L87 520.5 M87 516.5 L83 520.5" stroke="#d8d8d8" fill="none" stroke-width="1" /><text x="90" y="517.8" font-size="9.4" fill="#f0f0f0" font-weight="bold" style="font-family:'Liberation Sans'" stroke="#f0f0f0" stroke-width="0.25" textLength="103" lengthAdjust="spacingAndGlyphs" >Accessibility: Investigate</text><rect x="478.2" y="508.6" width="10.6" height="9.8" fill="none" rx="0" stroke="#9a9a9a" stroke-width="1" /><line x1="478.2" y1="511.9" x2="488.8" y2="511.9" stroke="#9a9a9a" stroke-width="0.9" /><line x1="478.2" y1="515.2" x2="488.8" y2="515.2" stroke="#9a9a9a" stroke-width="0.9" /><line x1="481.7" y1="508.6" x2="481.7" y2="518.4" stroke="#9a9a9a" stroke-width="0.9" /><line x1="485.2" y1="508.6" x2="485.2" y2="518.4" stroke="#9a9a9a" stroke-width="0.9" /><rect x="511.6" y="508.6" width="10.8" height="9.8" fill="none" rx="0" stroke="#9a9a9a" stroke-width="1" /><rect x="514.3" y="510.8" width="5.4" height="5.6" fill="none" rx="0" stroke="#9a9a9a" stroke-width="0.8" /><line x1="515.5" y1="512.8" x2="518.5" y2="512.8" stroke="#9a9a9a" stroke-width="0.7" /><line x1="515.5" y1="514.5" x2="518.5" y2="514.5" stroke="#9a9a9a" stroke-width="0.7" /><rect x="544.6" y="508.6" width="11" height="9.8" fill="none" rx="0" stroke="#9a9a9a" stroke-width="1" /><path d="M547.4 508.6 V515 H555.6 M551.3 508.6 V515" stroke="#9a9a9a" fill="none" stroke-width="1" /><line x1="570.5" y1="514" x2="576.5" y2="514" stroke="#6a6a6a" stroke-width="1" /><line x1="582" y1="514" x2="663" y2="514" stroke="#9a9a9a" stroke-width="1" /><rect x="622.3" y="511" width="1.4" height="6" fill="#b0b0b0" rx="0" /><path d="M668.8 514 H674.8 M671.8 511 V517" stroke="#6a6a6a" fill="none" stroke-width="1" /><text x="686" y="517.8" font-size="9.4" fill="#8a8a8a" font-weight="normal" style="font-family:'Liberation Sans'" stroke="#8a8a8a" stroke-width="0.25" textLength="20" lengthAdjust="spacingAndGlyphs" >100%</text><path d="M0 0 H7 C3 0.6 0.6 3 0.6 7 V0 Z" stroke="none" fill="#0b0b0d" stroke-width="1" /><path d="M0 523 V518 C0.6 521 2 523 4.5 523 Z" stroke="none" fill="#0b0b0d" stroke-width="1" /><path d="M3.5 523.2 C1.8 522.5 0.6 520.5 0.6 518 V6.5 C0.6 3 3 0.6 6.5 0.6 H716.5 C718.2 0.6 719.4 1.4 720 2.6" stroke="#9aa09a" fill="none" stroke-width="1.3" />
</svg>
</body></html>
